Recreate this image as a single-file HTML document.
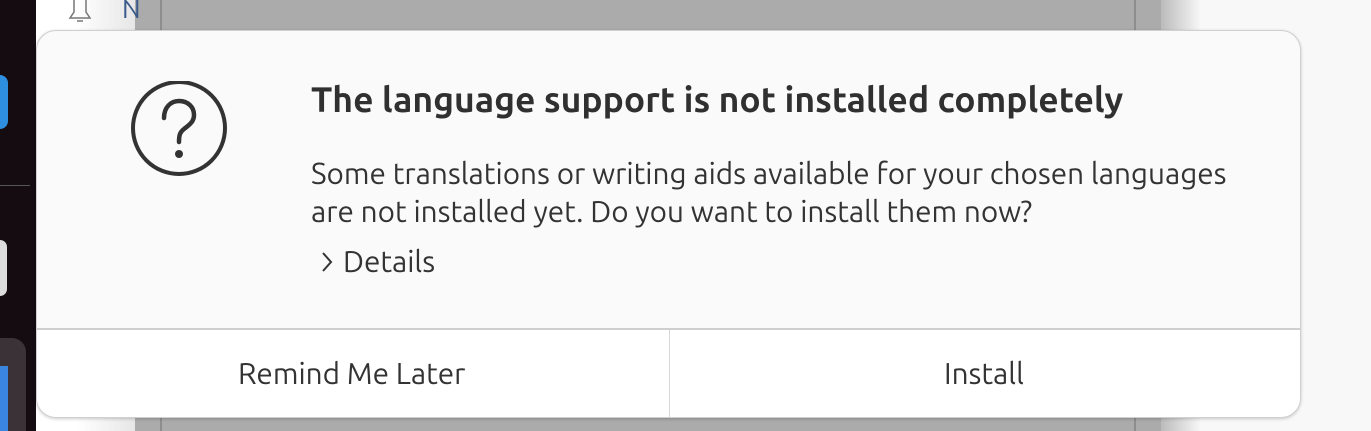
<!DOCTYPE html>
<html><head><meta charset="utf-8"><style>
*{margin:0;padding:0;box-sizing:border-box}
body{width:1371px;height:431px;overflow:hidden;position:relative;background:#f8f8f8;font-family:"Ubuntu","Liberation Sans",sans-serif;color:#333}
.dark{position:absolute;left:0;top:0;width:36px;height:431px;background:#140c11}
.lw{position:absolute;left:36px;top:0;width:100px;height:431px;background:linear-gradient(90deg,#fff 40%,#e6e6e6)}
.gray{position:absolute;left:135px;top:0;width:1026px;height:431px;background:#ababab}
.l1{position:absolute;left:160px;top:0;width:2px;height:431px;background:#8e8e8e}
.l2{position:absolute;left:1134px;top:0;width:2px;height:431px;background:#8e8e8e}
.rg{position:absolute;left:1161px;top:0;width:40px;height:431px;background:linear-gradient(90deg,#bbb,#f8f8f8)}
.dlg{position:absolute;left:36px;top:30px;width:1265px;height:388px;background:#fafafa;border:1px solid #d0d0d0;border-radius:20px;overflow:hidden;box-shadow:0 1px 3px rgba(0,0,0,.2)}
.title{position:absolute;left:274px;top:48px;font-size:35.5px;font-weight:bold;white-space:nowrap;color:#303030}
.body{position:absolute;left:274px;top:123px;font-size:29.7px;line-height:38px;white-space:nowrap;color:#333}
.det{position:absolute;left:306px;top:213px;font-size:29.7px;white-space:nowrap}
.bar{position:absolute;left:0;top:297px;width:100%;height:91px;background:#fff;border-top:2px solid #cfcfcf}
.vd{position:absolute;left:632px;top:0;width:1px;height:100%;background:#d8d8d8}
.b{position:absolute;top:26px;font-size:29.7px;white-space:nowrap}
</style></head><body>
<div class="dark"></div>
<div style="position:absolute;left:0;top:75px;width:8px;height:54px;border-radius:0 24px 24px 0;background:#2e8fe0"></div>
<div style="position:absolute;left:0;top:240px;width:7px;height:56px;border-radius:0 24px 24px 0;background:#ddd"></div>
<div style="position:absolute;left:0;top:185px;width:30px;height:1px;background:#555"></div>
<div style="position:absolute;left:0;top:338px;width:26px;height:93px;border-radius:0 14px 0 0;background:#3a3236"></div>
<div style="position:absolute;left:0;top:366px;width:8px;height:65px;background:#3a85e0"></div>
<div class="lw"></div><div class="gray"></div><div class="l1"></div><div class="l2"></div><div class="rg"></div>
<div style="position:absolute;left:122px;top:-6px;font-size:26px;color:#3a5a8a">N</div>
<svg style="position:absolute;left:66px;top:0" width="28" height="26"><path d="M8 0 V12 L4 18 H24 L20 12 V0" fill="none" stroke="#777" stroke-width="1.5"/><path d="M11 21 H17" stroke="#777" stroke-width="1.5"/></svg>
<div class="dlg">
<svg style="position:absolute;left:91px;top:50px" width="100" height="100"><circle cx="51" cy="47" r="46" fill="none" stroke="#333" stroke-width="4"/><path d="M36 37 C36 26 43 20 51 20 C60 20 66 26 66 34 C66 41 61 44 56 48 C52 51 51 54 51 61" fill="none" stroke="#333" stroke-width="4.5" stroke-linecap="round"/><circle cx="51" cy="73" r="4" fill="#333"/></svg>
<div class="title">The language support is not installed completely</div>
<div class="body">Some translations or writing aids available for your chosen languages<br>are not installed yet. Do you want to install them now?</div>
<svg style="position:absolute;left:283px;top:220px" width="14" height="22"><path d="M3 2 L11 11 L3 20" fill="none" stroke="#333" stroke-width="2"/></svg>
<div class="det">Details</div>
<div class="bar"><div class="vd"></div>
<div class="b" style="left:201px">Remind Me Later</div>
<div class="b" style="left:907px">Install</div></div>
</div>
</body></html>
